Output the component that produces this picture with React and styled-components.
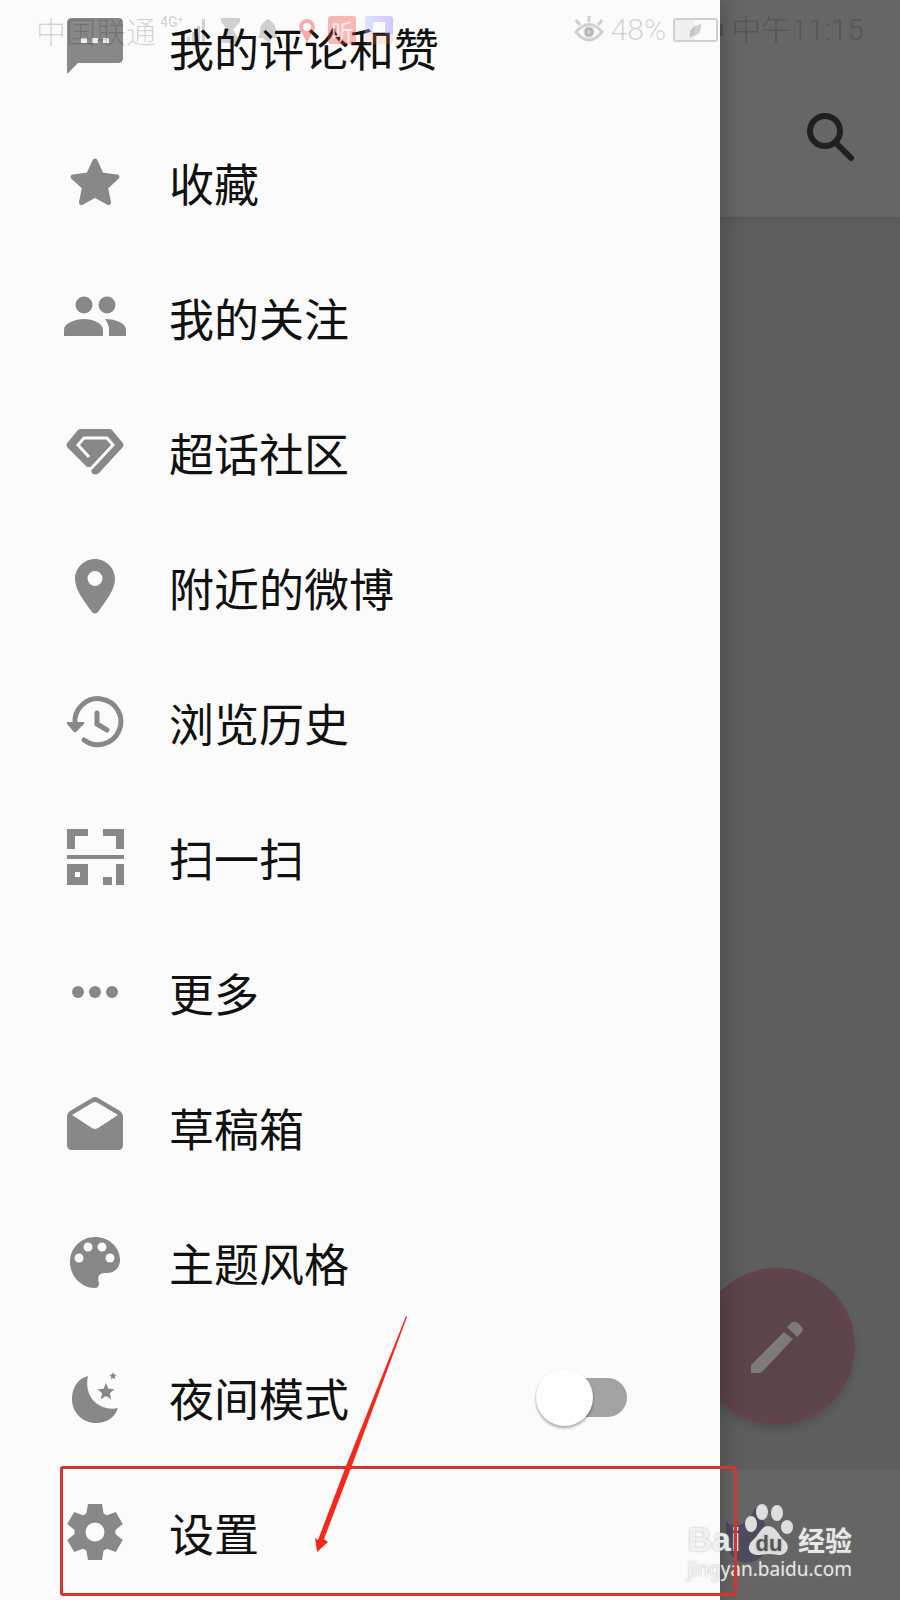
import React from "react";
import styled, { createGlobalStyle } from "styled-components";

const GlobalStyle = createGlobalStyle`
  * { box-sizing: border-box; }
  html, body { margin: 0; }
  body {
    background: #5f5f5f;
    font-family: "Noto Sans CJK SC", "Noto Sans", sans-serif;
    color: #111;
  }
  button { font: inherit; color: inherit; background: none; border: 0; padding: 0; }
`;

const Screen = styled.div`
  position: relative;
  height: 100vh;
  overflow: hidden;
`;

const Feed = styled.main`
  display: flex;
  flex-direction: column;
  height: 100%;
  background: #5f5f5f;
`;

const TopBar = styled.header`
  display: flex;
  justify-content: flex-end;
  align-items: flex-end;
  height: 217px;
  padding: 0 45px 50px 0;
  background: #666;
  box-shadow: 0 2px 8px #555;
`;

const FeedBody = styled.section`
  flex: 1;
  display: flex;
  justify-content: flex-end;
  align-items: flex-end;
  padding: 0 45px 45px 0;
`;

const ComposeButton = styled.button`
  display: flex;
  justify-content: center;
  align-items: center;
  width: 157px;
  height: 157px;
  border-radius: 50%;
  background: radial-gradient(closest-side, #5b4547 85%, #62434d);
  box-shadow: 0 5px 10px #4f5150;
`;

const BottomNav = styled.nav`
  display: flex;
  justify-content: flex-end;
  align-items: center;
  height: 130px;
  padding-right: 132px;
  background: #656565;
`;

const Drawer = styled.aside`
  position: absolute;
  inset: 0 20% 0 0;
  overflow: hidden;
  background: #fbfbfb;
`;

const DrawerShade = styled.div`
  position: absolute;
  inset: 0 20% 0 0;
  box-shadow: 0 0 24px rgba(0, 0, 0, 0.3);
`;

const Menu = styled.ul`
  list-style: none;
  margin: -20px 0 0;
  padding: 0;
`;

const Row = styled.li`
  display: flex;
  align-items: center;
  height: 135px;
  padding-right: 90px;
`;

const RowButton = styled.button`
  display: flex;
  align-items: center;
  flex: 1;
  gap: 37px;
  padding-left: 58px;
  text-align: left;
`;

const RowLabel = styled.span`
  font-size: 45px;
  line-height: 64px;
  white-space: nowrap;
`;

const MenuIcon = styled.svg`
  width: 74px;
  height: 74px;
  flex: none;
  fill: #888;
`;

const NightLabel = styled.label`
  display: flex;
  align-items: center;
  flex: 1;
  gap: 37px;
  padding-left: 58px;
`;

const Switch = styled.input`
  appearance: none;
  display: flex;
  align-items: center;
  width: 91px;
  height: 39px;
  margin: 0 3px 0 0;
  border-radius: 20px;
  background: linear-gradient(90deg, transparent 30px, #a3a3a3 30px);
  &::before {
    content: "";
    width: 57px;
    height: 57px;
    flex: none;
    border-radius: 50%;
    background: #fefefe;
    box-shadow: 0 2px 3px rgba(0, 0, 0, 0.35);
  }
`;

const StatusBar = styled.div`
  position: absolute;
  inset: 0 0 auto 0;
  display: flex;
  justify-content: space-between;
  align-items: center;
  height: 60px;
  padding: 0 36px;
  color: rgba(0, 0, 0, 0.17);
`;

const StatusGroup = styled.div`
  display: flex;
  align-items: center;
  gap: ${(p) => p.$gap}px;
`;

const StatusText = styled.span`
  font-family: ${(p) => (p.$digits ? "Roboto," : "")} "Noto Sans CJK SC", sans-serif;
  font-weight: ${(p) => (p.$small ? 500 : 300)};
  font-size: ${(p) => (p.$small ? 14 : 30)}px;
  line-height: ${(p) => (p.$small ? 16 : 32)}px;
  white-space: nowrap;
  align-self: ${(p) => (p.$small ? "flex-start" : "auto")};
`;

const ListenBadge = styled.span`
  width: 28px;
  height: 28px;
  border-radius: 3px;
  background: rgba(235, 60, 50, 0.35);
  color: rgba(255, 255, 255, 0.8);
  font-size: 22px;
  line-height: 28px;
  text-align: center;
`;

const Highlight = styled.div`
  position: absolute;
  left: 60px;
  right: 163px;
  bottom: 4px;
  height: 130px;
  border: 3px solid #d6342c;
  border-radius: 3px;
  pointer-events: none;
`;

const Pointer = styled.svg`
  position: absolute;
  left: 300px;
  bottom: 40px;
  width: 120px;
  height: 250px;
  pointer-events: none;
`;

const Watermark = styled.div`
  position: absolute;
  right: 48px;
  bottom: 18px;
  display: flex;
  flex-direction: column;
  color: rgba(255, 255, 255, 0.82);
  text-shadow: 0 0 2px rgba(150, 150, 150, 0.8);
`;

const Brand = styled.div`
  display: flex;
  align-items: flex-end;
  justify-content: space-between;
  height: 52px;
`;

const BrandLatin = styled.span`
  font: 700 34px/34px "Liberation Sans", sans-serif;
`;

const BrandChinese = styled.span`
  font-size: 27px;
  line-height: 32px;
  font-weight: 700;
`;

const Site = styled.span`
  font: 400 19px/26px "Noto Sans", sans-serif;
`;

const star = (cx, cy, r, ratio = 0.45) =>
  Array.from({ length: 10 }, (_, i) => {
    const a = (Math.PI * i) / 5 - Math.PI / 2;
    const d = i % 2 ? r * ratio : r;
    return `${(cx + d * Math.cos(a)).toFixed(2)},${(cy + d * Math.sin(a)).toFixed(2)}`;
  }).join(" ");

const gearTeeth = [0, 60, 120, 180, 240, 300];

const items = [
  {
    label: "我的评论和赞",
    icon: (
      <>
        <path d="M14 7H60Q65 7 65 12V47Q65 52 60 52H20L9 63V12Q9 7 14 7Z" />
        <path fill="#eee" d="M23 27h6v5h-6zM34 27h6v5h-6zM45 27h6v5h-6z" />
      </>
    ),
  },
  {
    label: "收藏",
    icon: <polygon points={star(37, 38, 23, 0.48)} stroke="#888" strokeWidth="5" strokeLinejoin="round" />,
  },
  {
    label: "我的关注",
    icon: (
      <>
        <circle cx="26" cy="24" r="8.5" />
        <circle cx="49" cy="24" r="8.5" />
        <path d="M6 55V49C6 42 17 38 26 38S45 42 45 49V55ZM47 38C58 38 68 42 68 49V55H51V49C51 44 49 41 47 38Z" />
      </>
    ),
  },
  {
    label: "超话社区",
    icon: (
      <>
        <path d="M23 13H51Q53 13 54 14L64 26Q67 29 64 32L41 57Q37 60 34 57Q32 54 35 51L29 51L10 32Q7 29 10 26L20 14Q21 13 23 13Z" />
        <path fill="none" stroke="#fbfbfb" strokeWidth="3" d="M31 41L20 29L26 22H49L55 29L28 58" />
      </>
    ),
  },
  {
    label: "附近的微博",
    icon: (
      <path fillRule="evenodd" d="M37 8C26 8 17 17 17 28C17 39 27 51 34 61Q37 64 40 61C47 51 57 39 57 28C57 17 48 8 37 8ZM37 20A7 7 0 1 1 37 35A7 7 0 1 1 37 20Z" />
    ),
  },
  {
    label: "浏览历史",
    icon: (
      <>
        <path fill="none" stroke="#888" strokeWidth="5" strokeLinecap="round" d="M17 38A23 23 0 1 1 26 54M39 27V38L49 44" />
        <path d="M10 36H25Q27 36 26 38L18 46Q17 47 15 45L9 38Q8 36 10 36Z" />
      </>
    ),
  },
  {
    label: "扫一扫",
    icon: (
      <path fillRule="evenodd" d="M9 8H30V15H17V28H9ZM45 8H66V28H58V15H45ZM9 34H66V38H9ZM9 43H30V64H9ZM17 51V56H22V51ZM58 43H66V64H58ZM45 56H54V64H45Z" />
    ),
  },
  {
    label: "更多",
    icon: (
      <>
        <circle cx="20" cy="36" r="6" />
        <circle cx="37" cy="36" r="6" />
        <circle cx="54" cy="36" r="6" />
      </>
    ),
  },
  {
    label: "草稿箱",
    icon: (
      <path fillRule="evenodd" d="M34 7Q37 5 40 7L62 20Q65 22 65 25V54Q65 59 60 59H14Q9 59 9 54V25Q9 22 12 20ZM14 24L34 37Q37 39 40 37L60 24L40 12Q37 10 34 12Z" />
    ),
  },
  {
    label: "主题风格",
    icon: (
      <>
        <path d="M37 11C23 11 12 22 12 36S23 62 37 62Q41 62 41 57Q38 48 46 47H49C57 47 62 41 62 34C62 21 51 11 37 11Z" />
        <g fill="#fbfbfb">
          <circle cx="21" cy="32" r="4.5" />
          <circle cx="30" cy="21" r="4.5" />
          <circle cx="44" cy="21" r="4.5" />
          <circle cx="52" cy="32" r="4.5" />
        </g>
      </>
    ),
  },
  {
    label: "夜间模式",
    toggle: true,
    icon: (
      <>
        <path d="M30 15C18 18 14 29 14 38C14 52 25 62 38 62C49 62 57 56 60 47C43 51 25 37 30 15Z" />
        <polygon points={star(48, 31, 9)} />
        <polygon points={star(55, 15, 4)} />
      </>
    ),
  },
  {
    label: "设置",
    icon: (
      <>
        <circle cx="37" cy="36" r="15" fill="none" stroke="#888" strokeWidth="11" />
        {gearTeeth.map((a) => (
          <path key={a} transform={`rotate(${a} 37 36)`} d="M30 8H44L46 20H28Z" />
        ))}
      </>
    ),
  },
];

function SearchIcon() {
  return (
    <svg width="50" height="50" viewBox="0 0 50 50" fill="none" stroke="#202020">
      <circle cx="20" cy="19" r="15" strokeWidth="6" />
      <path d="M32 32L34 34L46 46" strokeWidth="6" strokeLinecap="round" />
    </svg>
  );
}

function PencilIcon() {
  return (
    <svg width="54" height="54" viewBox="0 0 54 54" fill="#7d7a78">
      <path d="M1 45L34 12L43 19L13 51L10 53H1ZM37 7L42 2Q45 1 48 3L52 7Q53 10 52 12L47 17Z" />
    </svg>
  );
}

function SystemIcons() {
  return (
    <svg width="137" height="30" viewBox="0 0 137 30" fill="currentColor">
      <path d="M0 22h3v6h-3zM5 17h3v11h-3zM10 11h3v17h-3zM15 4h3v24h-3z" />
      <path d="M34 3H53V7L46 15L52 24V28H35V24L41 15L34 7Z" />
      <path d="M81 4C87 8 89 10 89 18L91 23H86L81 28L76 23H71L73 18C73 10 75 8 81 4Z" />
      <path fill="#eb3c3266" fillRule="evenodd" d="M120 4A8 8 0 0 1 125 18L120 28L115 18A8 8 0 0 1 120 4ZM120 8A4 4 0 1 0 120 16A4 4 0 1 0 120 8Z" />
    </svg>
  );
}

function GalleryIcon() {
  return (
    <svg width="28" height="28" viewBox="0 0 28 28">
      <defs>
        <linearGradient id="gallery">
          <stop offset="0" stopColor="#a8c8ff" />
          <stop offset="1" stopColor="#9b78ff" />
        </linearGradient>
      </defs>
      <path fill="url(#gallery)" opacity=".4" fillRule="evenodd" d="M3 0H25Q28 0 28 3V18H0V3Q0 0 3 0ZM8 6V18H20V6Z" />
      <path fill="#ff9f6b" opacity=".2" d="M0 18H28V25Q28 28 25 28H3Q0 28 0 25Z" />
    </svg>
  );
}

function EyeIcon() {
  return (
    <svg width="30" height="28" viewBox="0 0 30 28" fill="none" stroke="currentColor" strokeWidth="3">
      <path d="M2 16Q15 1 28 16Q15 32 2 16ZM15 0V6M2 4L6 9M28 4L24 9" />
      <circle cx="15" cy="16" r="4" fill="currentColor" />
    </svg>
  );
}

function BatteryIcon() {
  return (
    <svg width="51" height="24" viewBox="0 0 51 24" fill="none" stroke="currentColor" strokeWidth="2">
      <rect x="1" y="1" width="43" height="22" rx="2" />
      <path stroke="none" fill="currentColor" d="M28 6Q29 17 20 18L17 20Q14 9 28 6ZM47 6H50V18H47Z" />
      <path stroke="none" fill="currentColor" opacity=".25" d="M2 2H22V22H2Z" />
    </svg>
  );
}

function PawLogo() {
  return (
    <svg width="50" height="52" viewBox="0 0 50 52" fill="#dedede">
      <ellipse cx="7" cy="20" rx="6" ry="8" />
      <ellipse cx="18" cy="8" rx="6" ry="8" />
      <ellipse cx="33" cy="9" rx="6" ry="8" />
      <ellipse cx="43" cy="23" rx="6" ry="7" />
      <path d="M24 22C32 22 34 31 40 36C48 43 42 52 34 51Q25 49 16 51C5 52 1 43 9 36C15 31 17 22 24 22Z" />
      <text x="25" y="47" textAnchor="middle" fill="#555" fontFamily="Liberation Sans, sans-serif" fontSize="22" fontWeight="700">du</text>
    </svg>
  );
}

export default function App() {
  return (
    <>
      <GlobalStyle />
      <Screen>
        <Feed>
          <TopBar>
            <button aria-label="搜索"><SearchIcon /></button>
          </TopBar>
          <FeedBody>
            <ComposeButton aria-label="写微博"><PencilIcon /></ComposeButton>
          </FeedBody>
          <BottomNav>
            <svg width="42" height="60" viewBox="0 0 42 60" fill="#4d4b5e">
              <path d="M0 16Q5 22 14 20Q25 16 29 2Q42 20 42 32Q42 56 20 58Q0 55 0 30Z" />
            </svg>
          </BottomNav>
        </Feed>
        <DrawerShade />
        <Drawer>
          <Menu>
            {items.map((item) => (
              <Row key={item.label}>
                {item.toggle ? (
                  <>
                    <NightLabel htmlFor="night">
                      <MenuIcon viewBox="0 0 74 74">{item.icon}</MenuIcon>
                      <RowLabel>{item.label}</RowLabel>
                    </NightLabel>
                    <Switch id="night" type="checkbox" role="switch" />
                  </>
                ) : (
                  <RowButton>
                    <MenuIcon viewBox="0 0 74 74">{item.icon}</MenuIcon>
                    <RowLabel>{item.label}</RowLabel>
                  </RowButton>
                )}
              </Row>
            ))}
          </Menu>
        </Drawer>
        <StatusBar>
          <StatusGroup $gap={4}>
            <StatusText>中国联通</StatusText>
            <StatusText $small $digits>4G⁺</StatusText>
            <SystemIcons />
            <StatusGroup $gap={9}>
              <ListenBadge>听</ListenBadge>
              <GalleryIcon />
            </StatusGroup>
          </StatusGroup>
          <StatusGroup $gap={7}>
            <EyeIcon />
            <StatusText $digits>48%</StatusText>
            <BatteryIcon />
            <StatusText $digits>中午11:15</StatusText>
          </StatusGroup>
        </StatusBar>
        <Watermark>
          <Brand>
            <BrandLatin>Bai</BrandLatin>
            <PawLogo />
            <BrandChinese>经验</BrandChinese>
          </Brand>
          <Site>jingyan.baidu.com</Site>
        </Watermark>
        <Highlight />
        <Pointer viewBox="0 0 120 250" fill="#f5281b">
          <path d="M106 6L107 7L51 158L24 229L28 232L17 242L15 228L18 230L46 156Z" />
        </Pointer>
      </Screen>
    </>
  );
}
